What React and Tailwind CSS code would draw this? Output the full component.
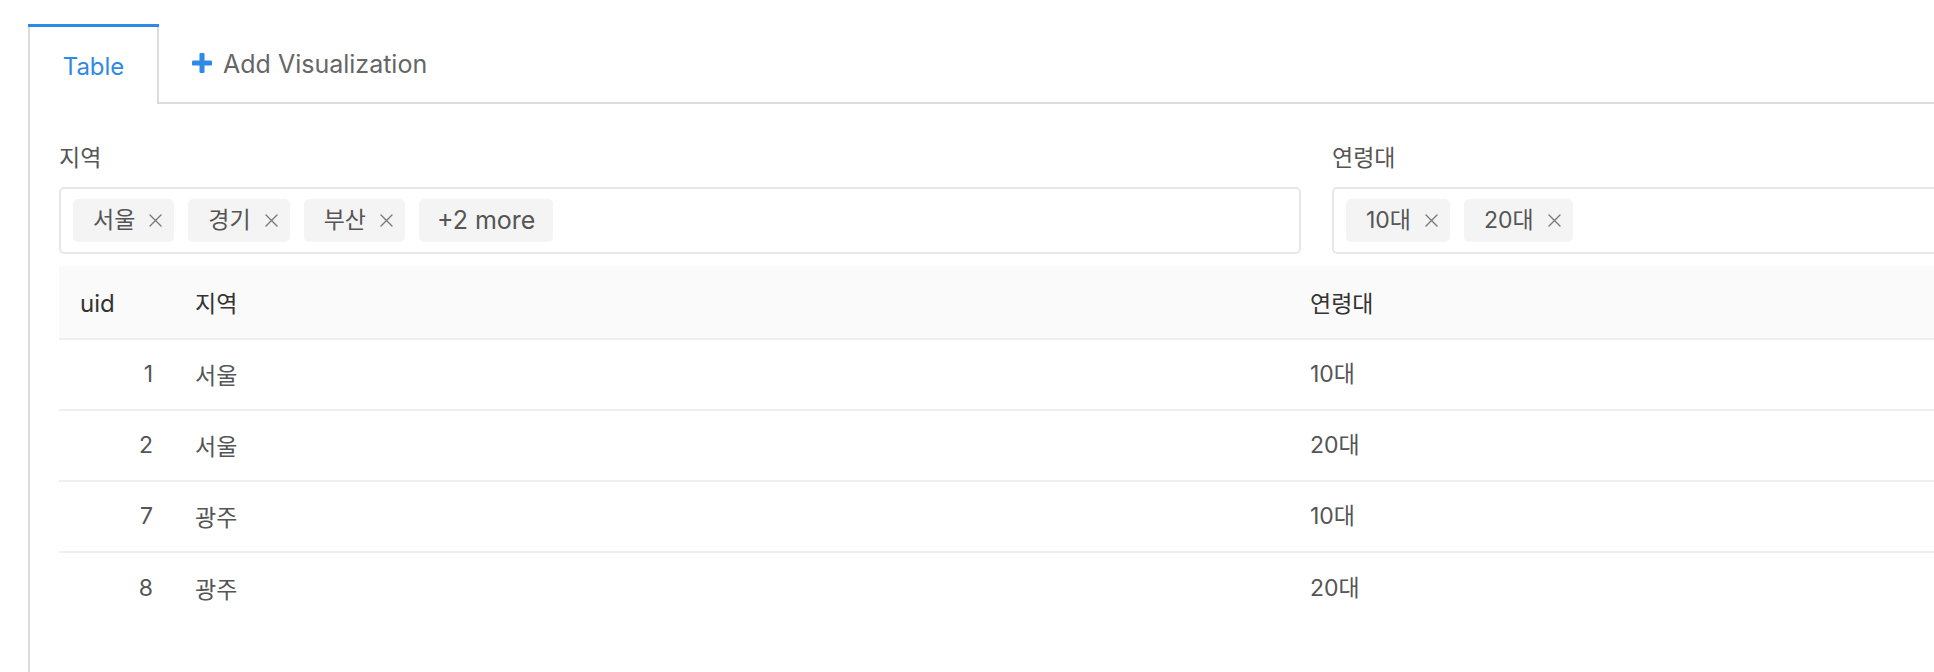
import React from "react";

function XIcon() {
  return (
    <svg width="13" height="13" viewBox="0 0 13 13" className="shrink-0">
      <path d="M1 1L12 12M12 1L1 12" stroke="#7a7a7a" strokeWidth="1.4" strokeLinecap="round" />
    </svg>
  );
}

function PlusIcon() {
  return (
    <svg width="20" height="20" viewBox="0 0 20 20" className="shrink-0">
      <rect x="7.5" y="0" width="5" height="20" rx="1.2" fill="#2f8ae5" />
      <rect x="0" y="7.5" width="20" height="5" rx="1.2" fill="#2f8ae5" />
    </svg>
  );
}

function Tag({ label }) {
  return (
    <span className="flex items-center h-[43px] pl-[20px] pr-[12px] gap-[14px] rounded-[5px] bg-[#f4f4f4] text-[#555] text-[23px] font-['Inter','Noto_Sans_CJK_KR',sans-serif] shrink-0">
      {label}
      <XIcon />
    </span>
  );
}

function MoreTag({ label }) {
  return (
    <span className="flex items-center h-[43px] px-[18px] rounded-[5px] bg-[#f4f4f4] text-[#555] text-[25px] font-['Inter','Noto_Sans_CJK_KR',sans-serif] shrink-0">
      {label}
    </span>
  );
}

function Filter({ label, children }) {
  return (
    <div className="w-[1242px] shrink-0 flex flex-col">
      <div className="h-[33px] leading-[33px] text-[23px] text-[#555] font-['Noto_Sans_CJK_KR',sans-serif]">
        {label}
      </div>
      <div className="mt-[14px] h-[67px] border-2 border-[#e8e8e8] rounded-[5px] flex items-center px-[12px] gap-[14px]">
        {children}
      </div>
    </div>
  );
}

const rows = [
  { uid: 1, region: "서울", age: "10대" },
  { uid: 2, region: "서울", age: "20대" },
  { uid: 7, region: "광주", age: "10대" },
  { uid: 8, region: "광주", age: "20대" },
];

export default function App() {
  return (
    <div className="w-[1934px] h-[672px] overflow-hidden bg-white">
      <div className="pt-[24px] pl-[28px] w-[2700px]">
        <div className="flex h-[80px]">
          <div className="w-[131px] flex flex-col">
            <div className="h-[3px] bg-[#2f8ae5]" />
            <div className="flex-1 border-x-2 border-[#dcdcdc] flex items-center justify-center pt-[3px] text-[#2f8ae5] text-[24px] font-['Inter',sans-serif]">
              Table
            </div>
          </div>
          <div className="flex-1 border-b-2 border-[#dcdcdc] flex items-center pl-[33px] gap-[11px] text-[#666] text-[25px] font-['Inter',sans-serif]">
            <PlusIcon />
            <span className="pt-[4px]">Add Visualization</span>
          </div>
        </div>
        <div className="border-l-2 border-[#dcdcdc] pl-[29px] pt-[36px] h-[600px]">
          <div className="flex gap-[31px]">
            <Filter label="지역">
              <Tag label="서울" />
              <Tag label="경기" />
              <Tag label="부산" />
              <MoreTag label="+2 more" />
            </Filter>
            <Filter label="연령대">
              <Tag label="10대" />
              <Tag label="20대" />
            </Filter>
          </div>
          <table className="mt-[12px] w-[2515px] table-fixed border-collapse">
            <colgroup>
              <col className="w-[115px]" />
              <col className="w-[1115px]" />
              <col />
            </colgroup>
            <thead>
              <tr className="h-[73px] bg-[#fafafa] border-b-2 border-[#eeeeee]">
                <th className="px-[21px] pt-[4px] text-left font-normal text-[24px] text-[#333] font-['Inter',sans-serif]">uid</th>
                <th className="px-[21px] text-left font-normal text-[23px] text-[#333] font-['Noto_Sans_CJK_KR',sans-serif]">지역</th>
                <th className="px-[21px] text-left font-normal text-[23px] text-[#333] font-['Noto_Sans_CJK_KR',sans-serif]">연령대</th>
              </tr>
            </thead>
            <tbody>
              {rows.map((r, i) => (
                <tr
                  key={r.uid}
                  className={i < rows.length - 1 ? "h-[71px] border-b-2 border-[#efefef]" : "h-[71px]"}
                >
                  <td className="px-[21px] text-right text-[23px] text-[#555] font-['Inter',sans-serif]">{r.uid}</td>
                  <td className="px-[21px] text-left text-[23px] text-[#555] font-['Noto_Sans_CJK_KR',sans-serif]">{r.region}</td>
                  <td className="px-[21px] text-left text-[23px] text-[#555] font-['Inter','Noto_Sans_CJK_KR',sans-serif]">{r.age}</td>
                </tr>
              ))}
            </tbody>
          </table>
        </div>
      </div>
    </div>
  );
}
